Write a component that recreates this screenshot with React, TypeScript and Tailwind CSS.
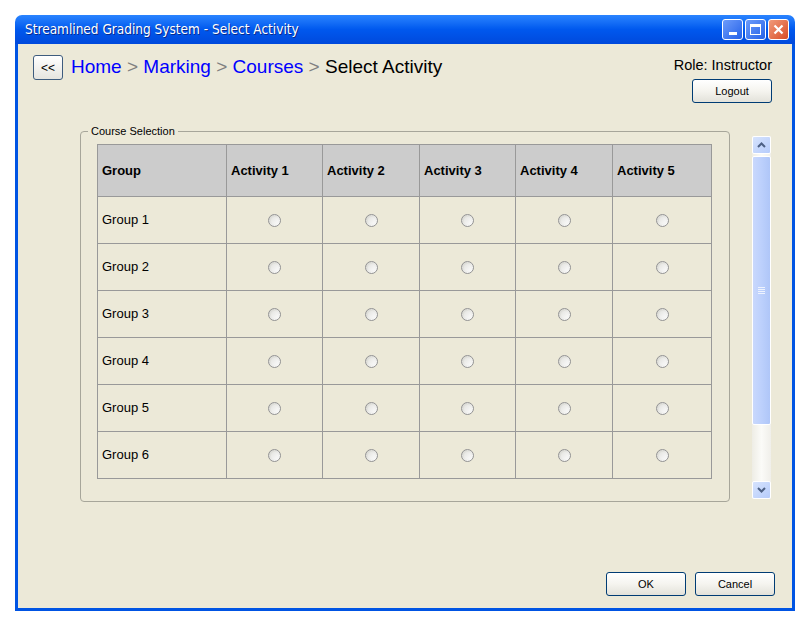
import React from 'react';

const activities = ['Activity 1', 'Activity 2', 'Activity 3', 'Activity 4', 'Activity 5'];
const groups = ['Group 1', 'Group 2', 'Group 3', 'Group 4', 'Group 5', 'Group 6'];

function XpButton({ label, className = '' }: { label: string; className?: string }) {
  return (
    <button
      className={`h-[24px] w-[80px] rounded-[3px] border border-[#003C74] bg-gradient-to-b from-white via-[#F5F4EF] to-[#E3E2DA] text-[11px] text-black font-['Liberation_Sans',sans-serif] ${className}`}
    >
      {label}
    </button>
  );
}

function Radio() {
  return (
    <span className="inline-block h-[13px] w-[13px] rounded-full border border-[#939393] bg-gradient-to-br from-[#D4D4CE] to-white p-[2px] align-middle">
      <span className="block h-full w-full rounded-full bg-gradient-to-br from-[#E4E4E0] to-[#FAFAFA]" />
    </span>
  );
}

function Arrow({ up }: { up?: boolean }) {
  return (
    <div className="flex h-[18px] w-[19px] items-center justify-center rounded-[2px] border border-white bg-gradient-to-br from-[#D6E3FD] to-[#B6CCFB]">
      <svg width="9" height="6" viewBox="0 0 9 6">
        <path
          d={up ? 'M1 5 L4.5 1.5 L8 5' : 'M1 1 L4.5 4.5 L8 1'}
          fill="none"
          stroke="#4D6185"
          strokeWidth="2"
        />
      </svg>
    </div>
  );
}

export default function App() {
  return (
    <div className="h-[625px] w-[810px] bg-white pl-[15px] pt-[15px] font-['Liberation_Sans',Arial,sans-serif]">
      <div className="flex h-[596px] w-[780px] flex-col">
        {/* Title bar */}
        <div className="flex h-[29px] items-center rounded-t-[7px] bg-gradient-to-b from-[#2A84FF] via-[#0058EE] to-[#0049DC] pl-[10px] pr-[6px]">
          <span className="flex-1 text-[13.5px] text-white font-['DejaVu_Sans_Condensed','DejaVu_Sans',sans-serif] [text-shadow:1px_1px_0_#0A2A8A]">
            Streamlined Grading System - Select Activity
          </span>
          <div className="flex gap-[2px]">
            <div className="flex h-[21px] w-[21px] items-end justify-center rounded-[3px] border border-white bg-gradient-to-br from-[#6D9BFA] to-[#2461E8] pb-[4px]">
              <div className="h-[3px] w-[8px] bg-white" />
            </div>
            <div className="flex h-[21px] w-[21px] items-center justify-center rounded-[3px] border border-white bg-gradient-to-br from-[#6D9BFA] to-[#2461E8]">
              <div className="h-[11px] w-[11px] border border-t-[3px] border-white" />
            </div>
            <div className="flex h-[21px] w-[21px] items-center justify-center rounded-[3px] border border-white bg-gradient-to-br from-[#F09A7A] to-[#D84A20]">
              <svg width="11" height="11" viewBox="0 0 11 11">
                <path d="M1.5 1.5 L9.5 9.5 M9.5 1.5 L1.5 9.5" stroke="white" strokeWidth="2.2" />
              </svg>
            </div>
          </div>
        </div>

        {/* Body */}
        <div className="flex flex-1 flex-col border-x-[3px] border-b-[3px] border-[#0054E3] bg-[#ECE9D8]">
          <div className="flex items-start justify-between pl-[15px] pr-[20px] pt-[11px]">
            <div className="flex items-start gap-[8px]">
              <button className="flex h-[25px] w-[30px] items-center justify-center rounded-[3px] border border-[#3E5C7E] bg-gradient-to-b from-white to-[#E6E5DF] text-[12px] text-black">
                &lt;&lt;
              </button>
              <div className="text-[19px] leading-[24px] text-[#808080]">
                <span className="text-[#0000FF]">Home</span> &gt;{' '}
                <span className="text-[#0000FF]">Marking</span> &gt;{' '}
                <span className="text-[#0000FF]">Courses</span> &gt;{' '}
                <span className="text-black">Select Activity</span>
              </div>
            </div>
            <div className="flex flex-col items-end pt-[2px]">
              <span className="text-[14.5px] leading-[17px] text-black">Role: Instructor</span>
              <XpButton label="Logout" className="mt-[5px]" />
            </div>
          </div>

          <div className="mt-[22px] flex pl-[62px]">
            <fieldset className="h-[377px] w-[650px] rounded-[4px] border border-[#A7A69A] pl-[16px] pt-[6px]">
              <legend className="-ml-[9px] px-[3px] text-[11px] leading-[13px] text-black">Course Selection</legend>
              <table className="border-collapse text-[13px] text-black">
                <thead>
                  <tr className="h-[52px] bg-[#CCCCCC]">
                    <th className="w-[129px] border border-[#999999] pl-[4px] text-left font-bold">Group</th>
                    {activities.map((a, i) => (
                      <th
                        key={a}
                        className={`border border-[#999999] pl-[4px] text-left font-bold ${
                          i === 0 || i === 2 ? 'w-[96px]' : i === 4 ? 'w-[99px]' : 'w-[97px]'
                        }`}
                      >
                        {a}
                      </th>
                    ))}
                  </tr>
                </thead>
                <tbody>
                  {groups.map((g) => (
                    <tr key={g} className="h-[47px]">
                      <td className="border border-[#999999] pl-[4px]">{g}</td>
                      {activities.map((a) => (
                        <td key={a} className="border border-[#999999] text-center">
                          <Radio />
                        </td>
                      ))}
                    </tr>
                  ))}
                </tbody>
              </table>
            </fieldset>

            {/* Scrollbar */}
            <div className="ml-[22px] mt-[11px] flex h-[363px] w-[19px] flex-col bg-gradient-to-r from-[#EEEDE5] via-[#FBFBF8] to-[#F0EFEA]">
              <Arrow up />
              <div className="mt-[2px] flex h-[269px] items-center justify-center rounded-[2px] border border-white bg-gradient-to-r from-[#C9D8FC] via-[#BCD0FC] to-[#AFC6F8]">
                <div className="flex flex-col gap-[1px]">
                  <div className="h-[1px] w-[7px] bg-[#EEF3FE]" />
                  <div className="h-[1px] w-[7px] bg-[#EEF3FE]" />
                  <div className="h-[1px] w-[7px] bg-[#EEF3FE]" />
                  <div className="h-[1px] w-[7px] bg-[#EEF3FE]" />
                </div>
              </div>
              <div className="flex-1" />
              <Arrow />
            </div>
          </div>

          <div className="mt-auto flex justify-end gap-[9px] pb-[12px] pr-[17px]">
            <XpButton label="OK" />
            <XpButton label="Cancel" />
          </div>
        </div>
      </div>
    </div>
  );
}
